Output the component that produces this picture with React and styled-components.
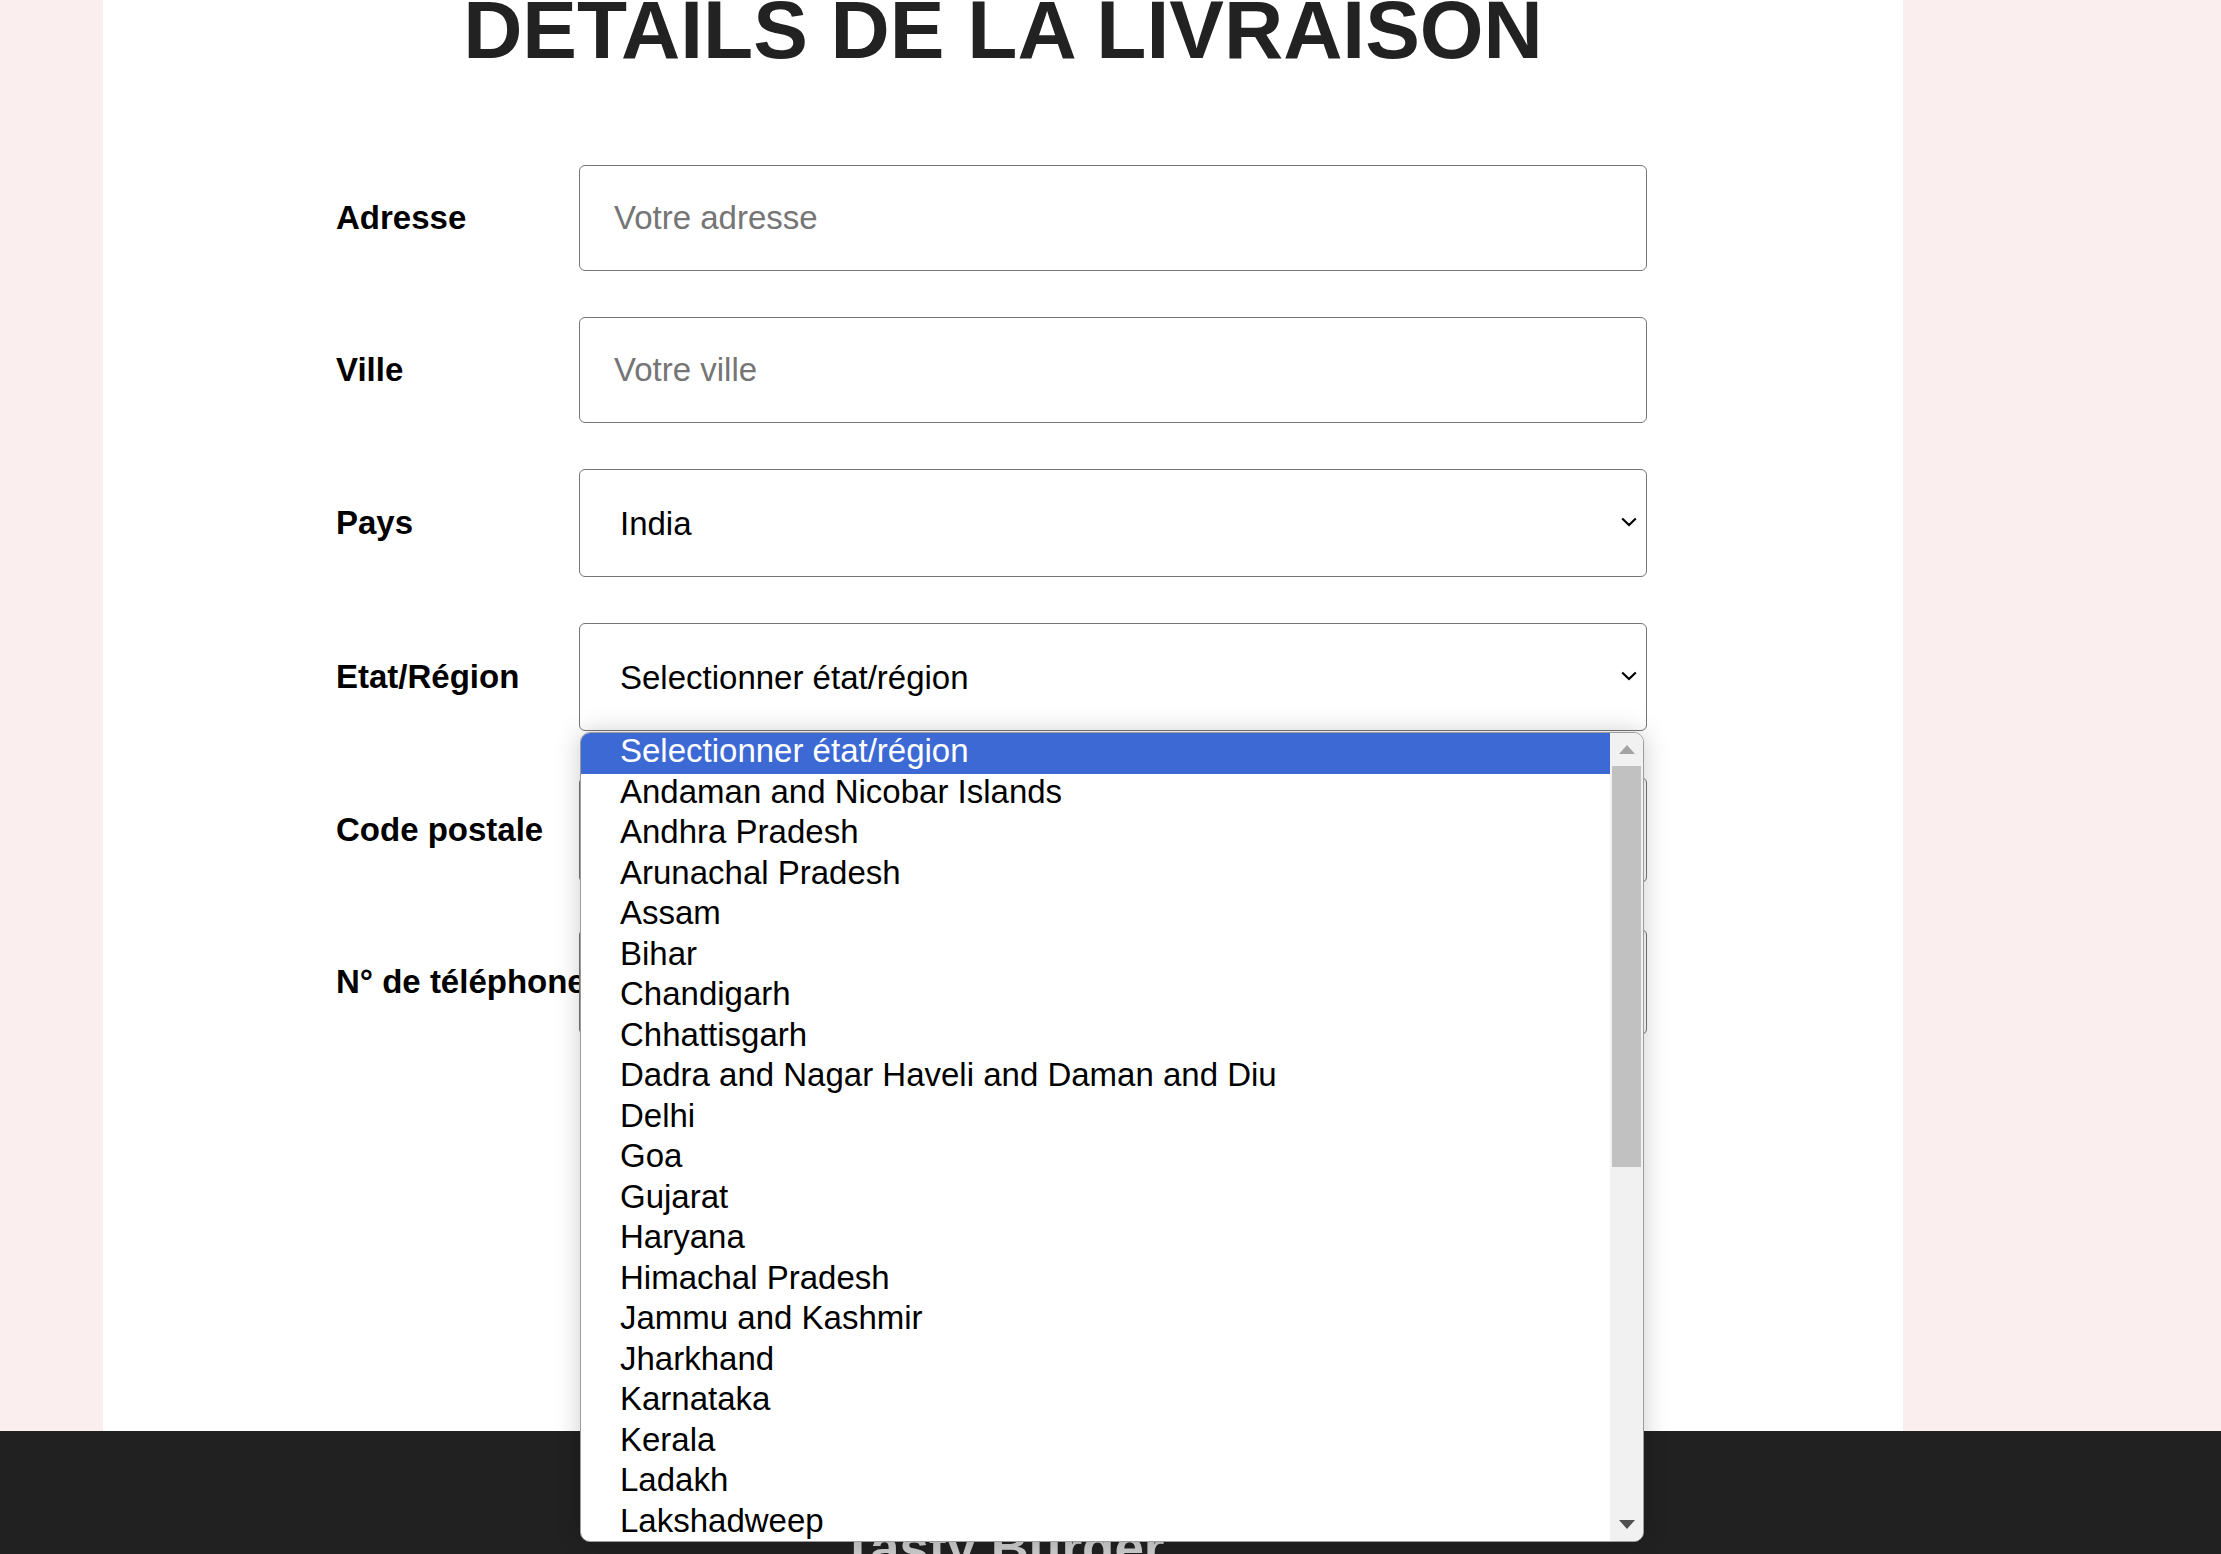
import React from 'react';
import styled, { createGlobalStyle } from 'styled-components';

const GlobalStyle = createGlobalStyle`
  body {
    margin: 0;
    background: #fbeeee;
    font-family: "Liberation Sans", Arial, sans-serif;
    overflow: hidden;
  }
`;

const Main = styled.main`
  display: flow-root;
  width: 1800px;
  min-height: 1431px;
  margin-left: 103px;
  background: #ffffff;
`;

const Title = styled.h1`
  margin: -11px 0 0;
  font-size: 82px;
  line-height: 1;
  font-weight: 700;
  text-align: center;
  color: #222222;
`;

const Form = styled.form`
  display: grid;
  grid-template-columns: 243px 1068px;
  row-gap: 46px;
  margin: 94px 0 0 233px;
`;

const Label = styled.label`
  display: flex;
  align-items: center;
  font-size: 33px;
  font-weight: 700;
  color: #000;
  white-space: nowrap;
`;

const Field = styled.div`
  position: relative;
`;

const Input = styled.input`
  display: block;
  width: 100%;
  height: 106px;
  box-sizing: border-box;
  padding: 0 34px;
  border: 1px solid #767676;
  border-radius: 6px;
  background: #fff;
  font-family: inherit;
  font-size: 33px;
  color: #000;
  outline: none;

  &::placeholder {
    color: #757575;
  }
`;

const Select = styled.select`
  display: block;
  width: 100%;
  height: 108px;
  box-sizing: border-box;
  padding: 0 60px 0 40px;
  border: 1px solid #767676;
  border-radius: 6px;
  background: #fff;
  font-family: inherit;
  font-size: 33px;
  color: #000;
  appearance: none;
  outline: none;
`;

const Chevron = styled.svg`
  position: absolute;
  right: 10px;
  top: 50%;
  width: 16px;
  height: 10px;
  margin-top: -6px;
  pointer-events: none;
`;

const Popup = styled.div`
  position: absolute;
  top: calc(100% + 1px);
  left: 1px;
  width: 1064px;
  height: 810px;
  box-sizing: border-box;
  display: flex;
  background: #fff;
  border: 1px solid #9c9c9c;
  border-radius: 10px;
  box-shadow: 0 0 26px rgba(0, 0, 0, 0.2);
  overflow: hidden;
  z-index: 10;
`;

const OptionList = styled.ul`
  flex: 1;
  margin: 0;
  padding: 0;
  list-style: none;
  overflow: hidden;
`;

const Option = styled.li`
  height: 40.5px;
  box-sizing: border-box;
  line-height: 35.5px;
  padding: 0 0 5px 39px;
  font-size: 33px;
  white-space: nowrap;
  color: ${(p) => (p.$active ? '#ffffff' : '#000000')};
  background: ${(p) => (p.$active ? '#3d69d4' : 'transparent')};
`;

const Scrollbar = styled.div`
  width: 33px;
  display: flex;
  flex-direction: column;
  align-items: center;
  background: #f1f1f1;
`;

const ArrowButton = styled.div`
  height: 33px;
  width: 100%;
  display: flex;
  align-items: center;
  justify-content: center;
  flex-shrink: 0;
`;

const Thumb = styled.div`
  width: 29px;
  height: 401px;
  background: #c1c1c1;
  flex-shrink: 0;
`;

const Track = styled.div`
  flex: 1;
`;

const Footer = styled.footer`
  background: #212121;
  height: 400px;
`;

const FooterInner = styled.div`
  width: 1800px;
  margin-left: 103px;
  padding-top: 86px;
  text-align: center;
  font-size: 53px;
  font-weight: 700;
  color: #cccccc;
`;

const states = [
  'Selectionner état/région',
  'Andaman and Nicobar Islands',
  'Andhra Pradesh',
  'Arunachal Pradesh',
  'Assam',
  'Bihar',
  'Chandigarh',
  'Chhattisgarh',
  'Dadra and Nagar Haveli and Daman and Diu',
  'Delhi',
  'Goa',
  'Gujarat',
  'Haryana',
  'Himachal Pradesh',
  'Jammu and Kashmir',
  'Jharkhand',
  'Karnataka',
  'Kerala',
  'Ladakh',
  'Lakshadweep',
  'Madhya Pradesh',
  'Maharashtra',
];

const ChevronIcon = () => (
  <Chevron viewBox="0 0 16 10">
    <path d="M1.2 1.5 L8 8 L14.8 1.5" fill="none" stroke="#000" strokeWidth="2.2" />
  </Chevron>
);

const App = () => {
  return (
    <>
      <GlobalStyle />
      <Main>
        <Title>DETAILS DE LA LIVRAISON</Title>
        <Form onSubmit={(e) => e.preventDefault()}>
          <Label>Adresse</Label>
          <Field>
            <Input placeholder="Votre adresse" />
          </Field>

          <Label>Ville</Label>
          <Field>
            <Input placeholder="Votre ville" />
          </Field>

          <Label>Pays</Label>
          <Field>
            <Select defaultValue="IN">
              <option value="IN">India</option>
            </Select>
            <ChevronIcon />
          </Field>

          <Label>Etat/Région</Label>
          <Field>
            <Select defaultValue="">
              <option value="">Selectionner état/région</option>
            </Select>
            <ChevronIcon />
            <Popup>
              <OptionList>
                {states.map((s, i) => (
                  <Option key={s} $active={i === 0}>
                    {s}
                  </Option>
                ))}
              </OptionList>
              <Scrollbar>
                <ArrowButton>
                  <svg width="16" height="9" viewBox="0 0 16 9">
                    <path d="M0 9 L8 0 L16 9 Z" fill="#a3a3a3" />
                  </svg>
                </ArrowButton>
                <Thumb />
                <Track />
                <ArrowButton>
                  <svg width="16" height="9" viewBox="0 0 16 9">
                    <path d="M0 0 L16 0 L8 9 Z" fill="#505050" />
                  </svg>
                </ArrowButton>
              </Scrollbar>
            </Popup>
          </Field>

          <Label>Code postale</Label>
          <Field>
            <Input />
          </Field>

          <Label>N° de téléphone</Label>
          <Field>
            <Input />
          </Field>
        </Form>
      </Main>
      <Footer>
        <FooterInner>Tasty Burger</FooterInner>
      </Footer>
    </>
  );
};

export default App;
